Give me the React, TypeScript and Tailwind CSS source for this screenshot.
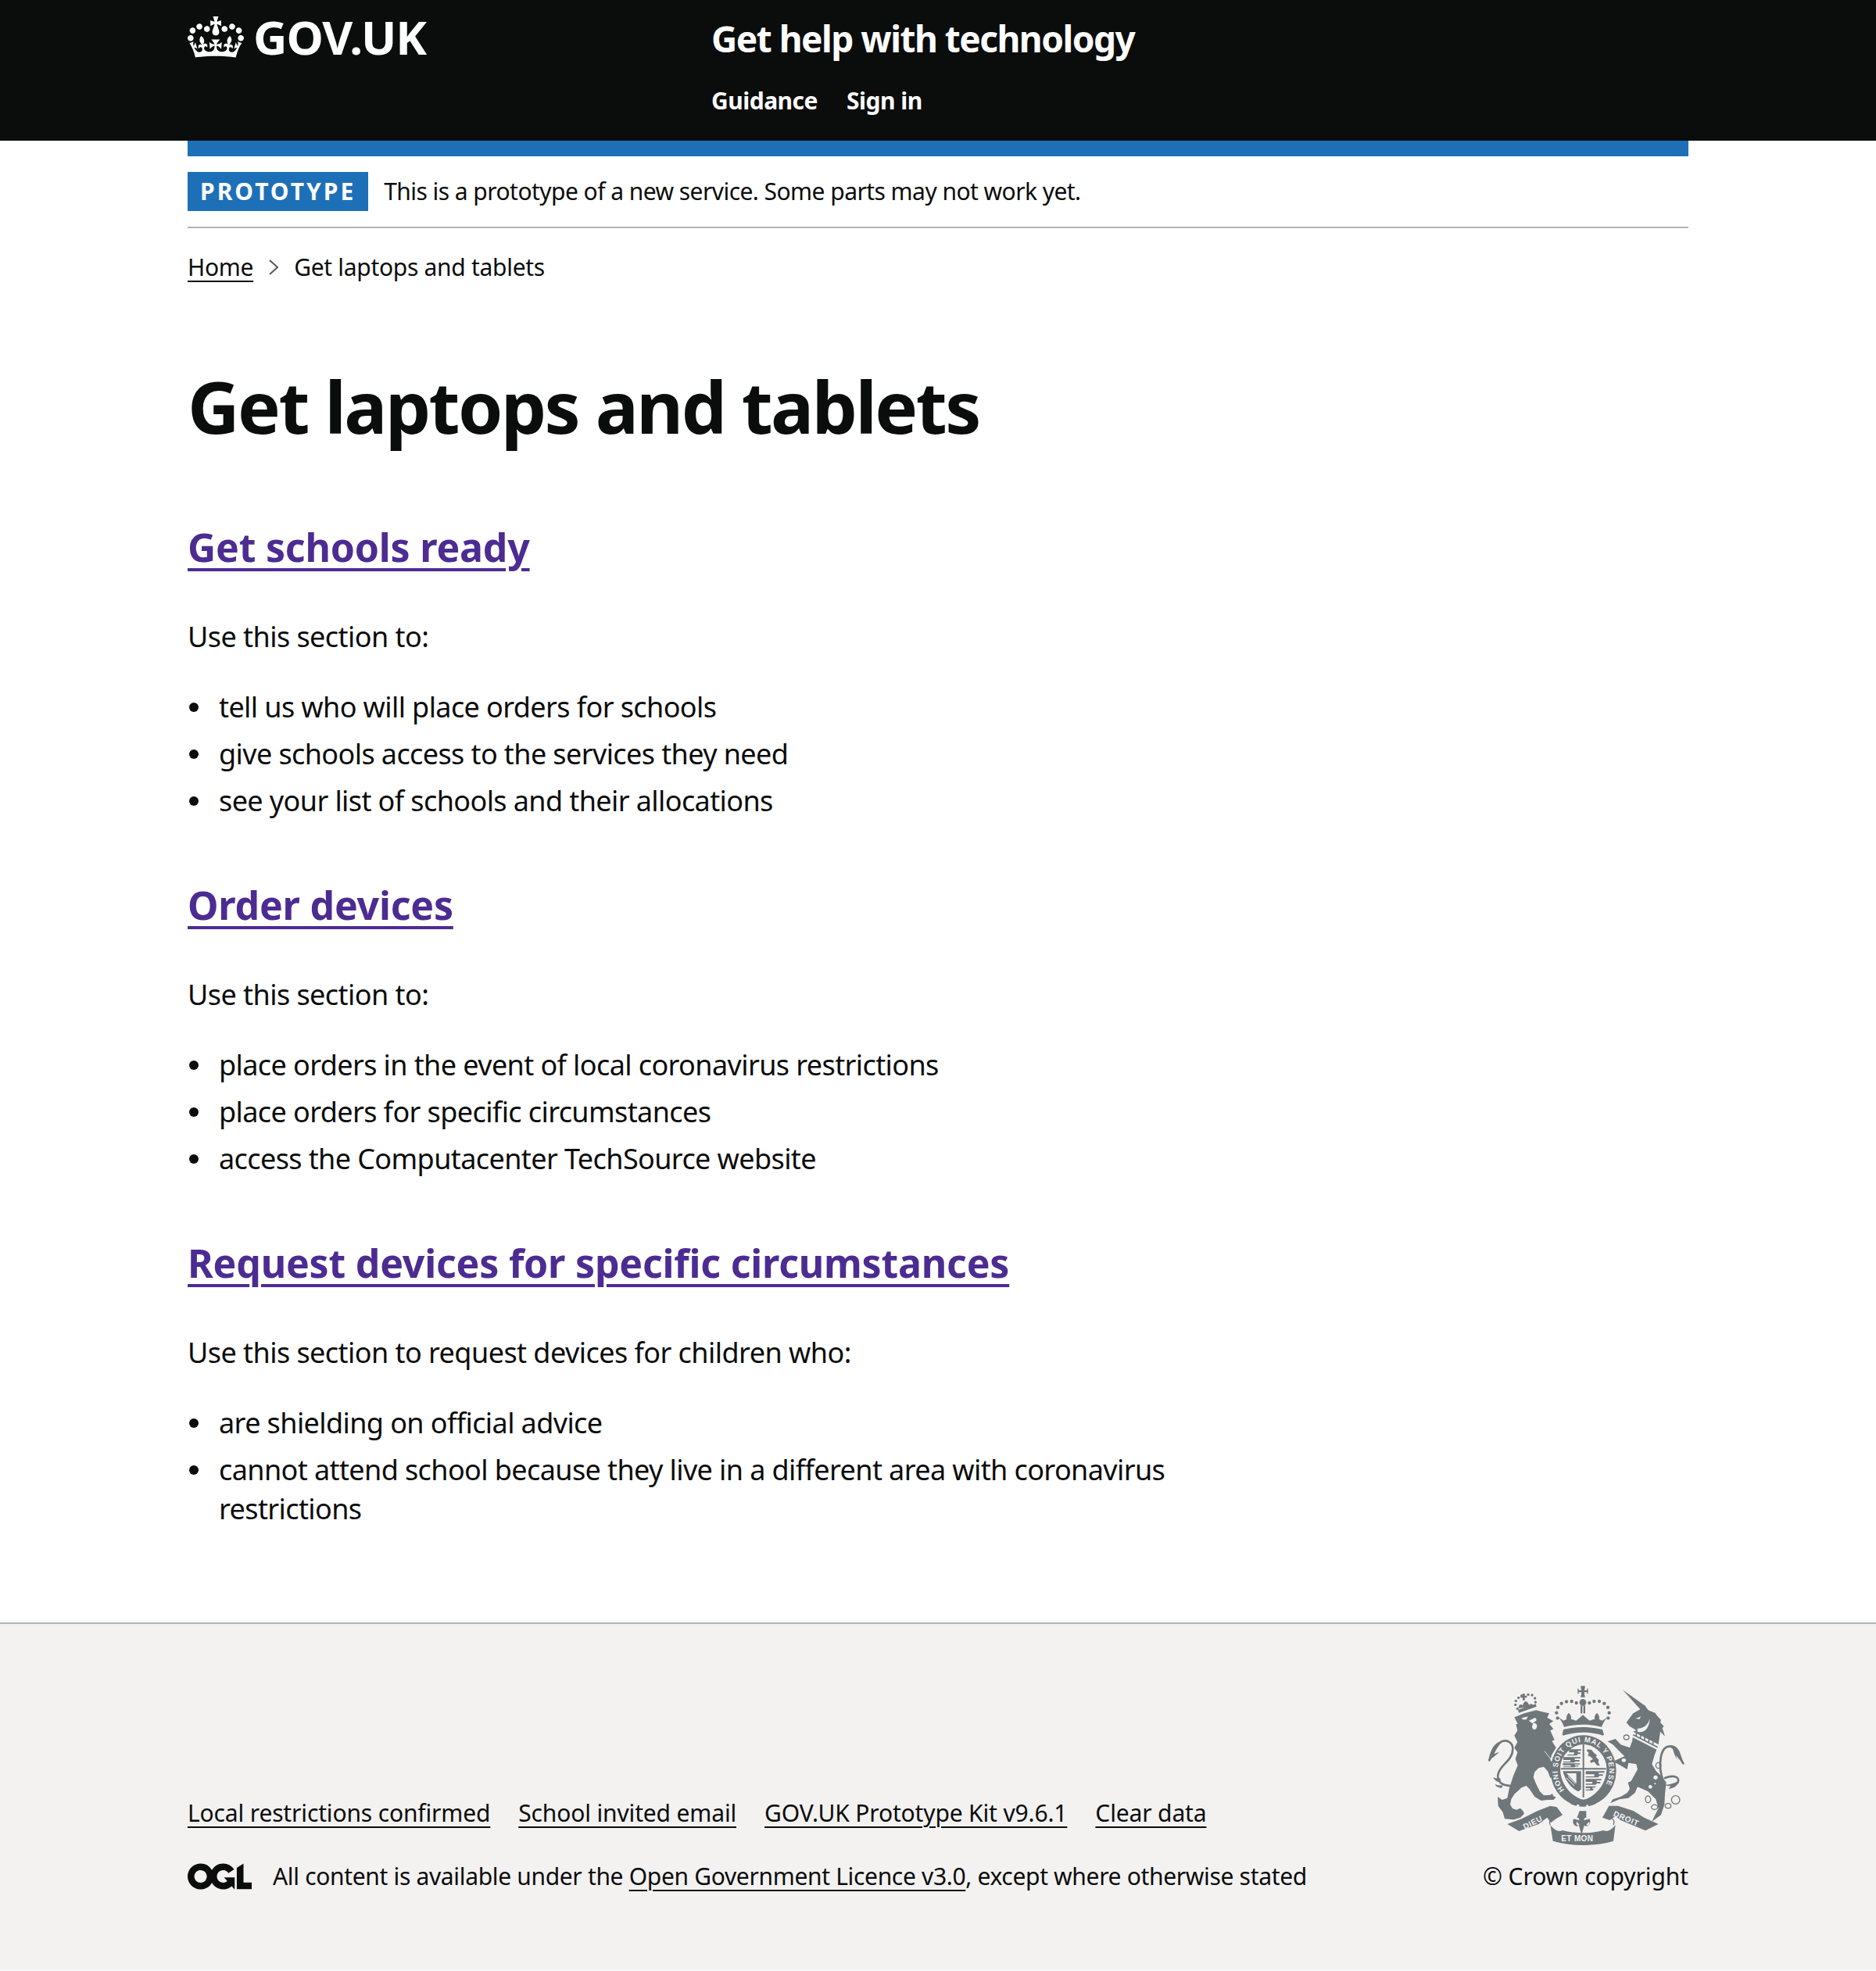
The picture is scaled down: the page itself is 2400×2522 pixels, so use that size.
const font = { fontFamily: '"Noto Sans", sans-serif' };

function CrownLogo() {
  return (
    <svg viewBox="0 0 132 97" width="72" height="53" className="shrink-0 fill-white">
      <path
        fillRule="evenodd"
        d="M25 30.2c3.5 1.5 7.7-.2 9.1-3.7 1.5-3.6-.2-7.8-3.9-9.2-3.6-1.4-7.6.3-9.1 3.9-1.4 3.5.3 7.5 3.9 9zM9 39.5c3.6 1.5 7.8-.2 9.2-3.7 1.5-3.6-.2-7.8-3.9-9.1-3.6-1.5-7.6.2-9.1 3.8-1.4 3.5.3 7.5 3.8 9zM4.4 57.2c3.5 1.5 7.7-.2 9.1-3.8 1.5-3.6-.2-7.7-3.9-9.1-3.5-1.5-7.6.3-9.1 3.8-1.4 3.5.3 7.6 3.9 9.1zm38.3-21.4c3.5 1.5 7.7-.2 9.1-3.8 1.5-3.6-.2-7.7-3.9-9.1-3.6-1.5-7.6.3-9.1 3.8-1.3 3.6.4 7.7 3.9 9.1zm64.4-5.6c-3.6 1.5-7.8-.2-9.1-3.7-1.5-3.6.2-7.8 3.8-9.2 3.6-1.4 7.7.3 9.2 3.9 1.3 3.5-.4 7.5-3.9 9zm15.9 9.3c-3.6 1.5-7.7-.2-9.1-3.7-1.5-3.6.2-7.8 3.7-9.1 3.6-1.5 7.7.2 9.2 3.8 1.5 3.5-.3 7.5-3.8 9zm4.7 17.7c-3.6 1.5-7.8-.2-9.2-3.8-1.5-3.6.2-7.7 3.9-9.1 3.6-1.5 7.7.3 9.2 3.8 1.3 3.5-.4 7.6-3.9 9.1zM89.3 35.8c-3.6 1.5-7.8-.2-9.2-3.8-1.4-3.6.2-7.7 3.9-9.1 3.6-1.5 7.7.3 9.2 3.8 1.4 3.6-.3 7.7-3.9 9.1zM69.7 17.7l8.9 4.7V9.3l-8.9 2.8c-.2-.3-.5-.6-.9-.9L72.4 0H59.6l3.6 11.2c-.3.3-.6.5-.9.9l-8.8-2.8v13.1l8.8-4.7c.3.3.6.7.9.9l-5 15.4v.1c-.2.8-.4 1.6-.4 2.4 0 4.1 3.1 7.5 7 8.1h.2c.3 0 .7.1 1 .1.4 0 .7 0 1-.1h.2c4-.6 7.1-4.1 7.1-8.1 0-.8-.1-1.7-.4-2.4V34l-5.1-15.4c.4-.2.7-.6 1-.9zM66 92.8c16.9 0 32.8 1.1 47.1 3.2 4-16.9 8.9-26.7 14-33.5l-9.6-3.4c1 4.9 1.1 7.2 0 10.2-1.5-1.4-3-4.3-4.2-8.7L108.6 76c2.8-2 5-3.2 7.5-3.3-4.4 9.4-10 11.9-13.6 11.2-4.3-.8-6.3-4.6-5.6-7.9 1-4.7 5.7-5.9 8-.5 4.3-8.7-3-11.4-7.6-8.8 7.1-7.2 7.9-13.5 2.1-21.1-8 6.1-8.1 12.3-4.5 20.8-4.7-5.4-12.1-2.5-9.5 6.2 3.4-5.2 7.9-2 7.2 3.1-.6 4.3-6.4 7.8-13.5 7.2-10.3-.9-10.9-8-11.2-13.8 2.5-.5 7.1 1.8 11 7.3L80.2 60c-4.1 4.4-8 5.3-12.3 5.4 1.4-4.4 8-11.6 8-11.6H55.5s6.4 7.2 7.9 11.6c-4.2-.1-8-1-12.3-5.4l1.4 16.4c3.9-5.5 8.5-7.7 10.9-7.3-.3 5.8-.9 12.8-11.1 13.8-7.2.6-12.9-2.9-13.5-7.2-.7-5 3.8-8.3 7.1-3.1 2.7-8.7-4.6-11.6-9.4-6.2 3.7-8.5 3.6-14.7-4.6-20.8-5.8 7.6-5 13.9 2.2 21.1-4.7-2.6-11.9.1-7.7 8.8 2.3-5.5 7.1-4.2 8.1.5.7 3.3-1.3 7.1-5.7 7.9-3.5.7-9-1.8-13.5-11.2 2.5.1 4.7 1.3 7.5 3.3l-4.7-15.4c-1.2 4.4-2.7 7.2-4.3 8.7-1.1-3-.9-5.3 0-10.2l-9.5 3.4c5 6.9 9.9 16.7 14 33.5 14.8-2.1 30.8-3.2 47.7-3.2z"
      />
    </svg>
  );
}

function OglLogo() {
  return (
    <svg viewBox="0 0 483.2 195.7" width="82" height="34" className="shrink-0 fill-[#0b0c0c]">
      <path d="M421.5 142.8V.1l-50.7 32.3v161.1h112.4v-50.7zm-122.3-9.6A47.12 47.12 0 0 1 221 97.8c0-26 21.1-47.1 47.1-47.1 16.7 0 31.4 8.7 39.7 21.8l42.7-27.2A97.63 97.63 0 0 0 268.1 0c-36.5 0-68.3 20.1-85.1 49.7A98 98 0 0 0 97.8 0C43.9 0 0 43.9 0 97.8s43.9 97.8 97.8 97.8c36.5 0 68.3-20.1 85.1-49.7a97.76 97.76 0 0 0 149.6 25.4l19.4 22.2h3v-87.8h-80l24.3 27.5zM97.8 145c-26 0-47.1-21.1-47.1-47.1s21.1-47.1 47.1-47.1 47.2 21 47.2 47S123.8 145 97.8 145" />
    </svg>
  );
}

const crestDots = [
  [278, 148], [274, 128], [279, 107], [293, 92], [312, 85], [332, 84], [350, 90],
  [400, 90], [418, 84], [438, 84], [457, 92], [471, 107], [476, 128], [472, 148],
];
const lionCrownDots = [
  [124, 112], [116, 97], [118, 82], [128, 70], [140, 62], [165, 58], [180, 60], [191, 72], [193, 87],
];

// royal arms, hand drawn at 3x the size it is shown
function Crest() {
  const c = "#6f777b";
  const bg = "#f3f2f1";
  return (
    <svg viewBox="0 0 780 660" width="260" height="220" className="shrink-0">
      {/* royal crown */}
      <g fill={c}>
        <path d="M367 25h16v10h-2v6h10v-6h4v20h-4v-6h-10v12h2v7h-16v-7h2V49h-10v6h-4V35h4v6h10v-6h-2z" />
        <circle cx="375" cy="88" r="13" />
        <rect x="366" y="100" width="7" height="30" />
        <rect x="377" y="100" width="7" height="30" />
        {crestDots.map(([x, y], i) => (
          <circle key={i} cx={x} cy={y} r="6.5" />
        ))}
        <path d="M303 182c-5-14-12-26-20-36l18 12 12-6c-4-8 2-18 8-24 6 6 12 16 8 24l8 2 12 4 10-8 16-14 16 14 10 8 12-4 8-2c-4-8 2-18 8-24 6 6 12 16 8 24l12 6 18-12c-8 10-15 22-20 36-48-12-98-12-144 0z" />
        <path d="M300 192c50-12 100-12 150 0l6 20c-4 4-6 4-8 2-46-14-98-14-144 0-4 2-6 0-8-2z" />
      </g>

      {/* lion crown */}
      <g fill={c}>
        {lionCrownDots.map(([x, y], i) => (
          <circle key={i} cx={x} cy={y} r="5" />
        ))}
        <path d="M144 54h8v8h8v8h-8v10h-8V70h-8v-8h8z" />
        <path d="M128 110c0-12 8-18 16-10 2-10 8-16 12-16s10 6 12 14c8-8 16-4 18 6z" />
        <path d="M126 116l68-22 3 10-68 24z" />
      </g>

      {/* lion */}
      <path
        fill={c}
        strokeLinejoin="round"
        d="M112 145L150 130L195 118L225 125L246 130L238 146L262 160L246 170L262 190L250 196L266 232L256 236L272 262L255 290L250 310L270 332L282 360L275 378L262 372L250 378L240 352L225 335L205 340L190 355L185 375L195 400L210 430L225 445L250 443L258 438L262 448L272 452L262 462L240 462L215 465L190 450L170 420L158 408L140 415L112 440L100 460L96 480L105 495L120 500L135 494L145 505L150 515L135 530L110 538L75 535L68 510L50 485L48 450L65 462L85 455L92 420L108 370L125 330L116 305L124 280L112 262L124 240L112 215L124 196L118 172L125 170Z"
      />
      <path fill={bg} d="M140 148l24-6-6 12-14 0zM168 158l24-12 6 10-12 10-6 2zM184 168c8-2 14 2 15 10 0 8-4 14-9 14-7 0-10-6-10-12z" />
      <path fill="none" stroke={bg} strokeWidth="2.5" d="M228 275l46 60" />
      <path
        fill="none"
        stroke={c}
        strokeWidth="8"
        strokeLinecap="round"
        d="M110 408C70 410 42 396 50 362C58 326 106 312 106 266C106 240 80 228 60 240C44 252 36 275 16 310"
      />
      <path fill={c} d="M62 238c-16 14-26 30-28 48 8-4 14-6 20-6-8 6-20 18-42 32 4-20 8-32 14-44 8-16 20-28 36-30zM30 375c10 4 20 6 28 4l2 14c-14 2-22-4-30-18zM38 402c10 4 20 6 30 4l-4 10c-12 0-22-4-26-14z" />

      {/* unicorn */}
      <path fill={c} d="M528 40L610 98L598 118Z" />
      <path
        fill={c}
        strokeLinejoin="round"
        d="M605 100L612 98L626 118L652 128L662 142L675 155L672 164L686 180L680 186L690 218L672 200L665 250L650 290L640 325L655 350L680 375L695 395L690 440L688 480L675 520L640 545L652 520L665 495L655 460L625 430L585 412L575 435L550 455L515 460L480 475L490 460L520 450L545 435L555 420L548 395L560 390L585 345L580 325L550 320L545 345L510 325L490 315L535 295L515 275L490 250L470 238L500 228L520 250L555 262L565 235L568 200L580 195L555 180L542 165L568 130L595 115Z"
      />
      <path fill={bg} d="M578 150l20-8-6 10zM585 188c25 0 40-14 47-38-2 38-22 58-48 50z" />
      <path fill={bg} d="M568 200l98 50-6 20-98-50z" />
      <path fill="none" stroke={c} strokeWidth="5" d="M568 212l94 48M580 205v14M596 213v14M612 222v14M628 230v14M644 238v14" />
      <g fill={bg} stroke={c} strokeWidth="4">
        <ellipse cx="542" cy="222" rx="10" ry="9" />
        <ellipse cx="532" cy="310" rx="10" ry="9" />
        <ellipse cx="665" cy="330" rx="10" ry="11" />
      </g>
      <g fill="none" stroke={c} strokeWidth="4">
        <ellipse cx="625" cy="460" rx="10" ry="13" />
        <ellipse cx="650" cy="490" rx="12" ry="9" />
        <ellipse cx="702" cy="485" rx="11" ry="9" />
        <circle cx="731" cy="462" r="16" />
      </g>
      <circle cx="654" cy="376" r="8" fill={bg} />
      <circle cx="634" cy="412" r="7" fill={bg} />
      <circle cx="652" cy="400" r="3" fill={bg} />
      <path
        fill="none"
        stroke={c}
        strokeWidth="8"
        strokeLinecap="round"
        d="M682 385C665 340 668 262 705 257C730 254 745 300 760 322M690 378C722 366 748 372 740 395"
      />
      <path fill={c} d="M708 252c18-2 34 10 40 30l14 40c-10-8-22-18-28-30 0 6 2 12 6 18-10-12-16-28-20-44zM744 392c-6 16-20 26-40 28l8-12c-10 2-16 0-20-4 14 0 30-4 48-14z" />

      {/* shield */}
      <ellipse cx="377" cy="350" rx="126" ry="136" fill={c} />
      <path fill={bg} d="M288 343C288 292 330 252 377 248C424 252 466 292 466 343C466 400 425 450 377 462C329 450 288 400 288 343Z" />
      <path fill="none" stroke={c} strokeWidth="6" d="M377 248v205M290 343h174" />
      <g fill={c}>
        <path d="M322 268h46v6h-12v6h10v6h-10l-4 6h-36v-4h24l2-8h-20z" />
        <path d="M300 298h66v5h-22v6h18v6h-16l-4 4h-42v-4h26l2-6h-28z" />
        <path d="M298 322h66v4h-20v4h14v4h-12l-2 3h-44v-3h28l2-5h-32z" />
        <path d="M386 352h72v6h-22v6h16v6h-14l-4 6h-48v-4h32l2-8h-34z" />
        <path d="M386 382h60v5h-18v6h14v6h-14l-4 5h-38v-4h24l2-7h-26z" />
        <path d="M386 410h40l-4 5h-10v5h6l-6 6h-26v-4h16l2-5h-18z" />
        <path d="M392 268l16 2 10 12 12 10-6 4 12 12-2 10 6 12h-10l-12-14-12 4-4-8 12-6-10-10-10-4 4-10-8-8z" />
        <path fillRule="evenodd" d="M298 352h70v70l-10 8c-26-10-50-40-60-78zM312 360l38 40v-40z" />
        <path d="M318 372l28 28M312 378l30 30" fill="none" stroke={bg} strokeWidth="3" />
      </g>
      <path id="crest-ring" d="M304 424A99 110 0 1 1 450 424" fill="none" />
      <text fontFamily="Liberation Sans" fontWeight="700" fontSize="28" fill={bg}>
        <textPath href="#crest-ring" textLength="462" lengthAdjust="spacing">HONI SOIT QUI MAL Y PENSE</textPath>
      </text>
      <path fill={c} d="M320 448c36 18 78 18 112 0l-8 30c-30 14-66 14-96 0z" />
      <circle cx="356" cy="484" r="5" fill={bg} />
      <circle cx="392" cy="486" r="5" fill={bg} />

      {/* ribbon and fleur */}
      <g fill={c}>
        <path d="M85 555L140 535L200 505L250 485L275 490L297 520L272 535L252 550L238 530L205 555L130 582Z" />
        <path d="M665 555L610 530L570 505L510 485L475 485L450 530L478 540L500 525L520 540L615 580Z" />
        <path d="M250 558c10 14 24 24 36 24 2 0 8-2 14-2 40 12 110 12 150 0 8 0 12 2 14 2 12 0 26-10 36-24l-8 62c-64 20-160 22-232 0z" />
        <path d="M362 505h26v26h-6l-4 10 22-6c6 8 4 24-10 28l-10-2-4 14-4 14h-4l-4-14-4-14-10 2c-14-4-16-20-10-28l22 6-4-10h-6z" />
      </g>
      <path fill={bg} d="M352 546c-4 6-2 12 4 14l6-2zM398 546c4 6 2 12-4 14l-6-2z" />
      <path fill="none" stroke={c} strokeWidth="4" d="M250 558c-8-16 4-30 22-26M492 558c8-16-4-30-22-26" />
      <g fontFamily="Liberation Sans" fontWeight="700" fontSize="30" fill={bg}>
        <text x="152" y="576" letterSpacing="2" transform="rotate(-27 152 576)">DIEU</text>
        <text x="292" y="622" letterSpacing="1">ET MON</text>
        <text x="490" y="523" letterSpacing="2" transform="rotate(23 490 523)">DROIT</text>
      </g>
    </svg>
  );
}

function Section({ title, intro, items }: { title: string; intro: string; items: string[] }) {
  return (
    <section className="mb-[78px] last:mb-0">
      <h2 className="mb-[60px] text-[50px] leading-[60px] font-bold tracking-[-0.2px]">
        <a href="#" className="text-[#4c2c92] underline decoration-[4px] underline-offset-[8px]">
          {title}
        </a>
      </h2>
      <p className="mb-10 text-[36px] leading-[50px] tracking-[-0.55px]">{intro}</p>
      <ul className="max-w-[1280px] text-[36px] leading-[50px] tracking-[-0.6px]">
        {items.map((item) => (
          <li key={item} className="mb-[10px] flex last:mb-0">
            <span className="mt-[19px] mr-[26px] ml-[2px] size-[12px] shrink-0 rounded-full bg-[#0b0c0c]" />
            <span>{item}</span>
          </li>
        ))}
      </ul>
    </section>
  );
}

export default function App() {
  return (
    <div style={font} className="min-h-[2522px] bg-white text-[#0b0c0c]">
      <header className="h-[180px] bg-[#0b0c0c] text-white">
        <div className="mx-auto flex w-[1920px]">
          <div className="flex w-[670px] items-center gap-[12px] self-start pt-[21px]">
            <CrownLogo />
            <span className="text-[60px] leading-[53px] font-bold tracking-[-1px]">GOV.UK</span>
          </div>
          <div className="pt-[19px]">
            <div className="text-[46px] leading-[60px] font-bold tracking-[-1.5px]">Get help with technology</div>
            <nav className="mt-[30px] flex gap-[37px] text-[30px] leading-[40px] font-bold tracking-[-0.5px]">
              <a href="#">Guidance</a>
              <a href="#">Sign in</a>
            </nav>
          </div>
        </div>
      </header>

      <div className="mx-auto w-[1920px]">
        <div className="h-5 bg-[#1d70b8]" />
        <div className="flex items-center gap-5 border-b-2 border-[#b1b4b6] py-5">
          <strong className="bg-[#1d70b8] px-4 text-[30px] leading-[50px] font-bold tracking-[3px] text-white">PROTOTYPE</strong>
          <span className="text-[30px] leading-[40px] tracking-[-0.55px]">This is a prototype of a new service. Some parts may not work yet.</span>
        </div>
        <nav className="mt-[30px] flex items-center text-[30px] leading-[40px] tracking-[-0.3px]">
          <a href="#" className="underline decoration-2 underline-offset-[6px]">Home</a>
          <svg viewBox="0 0 12 20" width="12" height="20" className="mx-[20px] fill-none stroke-[#505a5f] stroke-2">
            <path d="M1 1l10 9L1 19" />
          </svg>
          <span>Get laptops and tablets</span>
        </nav>

        <main className="pt-[108px]">
          <h1 className="mb-[100px] text-[92px] leading-[100px] font-bold tracking-[-2.5px]">Get laptops and tablets</h1>
          <Section
            title="Get schools ready"
            intro="Use this section to:"
            items={[
              "tell us who will place orders for schools",
              "give schools access to the services they need",
              "see your list of schools and their allocations",
            ]}
          />
          <Section
            title="Order devices"
            intro="Use this section to:"
            items={[
              "place orders in the event of local coronavirus restrictions",
              "place orders for specific circumstances",
              "access the Computacenter TechSource website",
            ]}
          />
          <Section
            title="Request devices for specific circumstances"
            intro="Use this section to request devices for children who:"
            items={[
              "are shielding on official advice",
              "cannot attend school because they live in a different area with coronavirus restrictions",
            ]}
          />
        </main>
      </div>

      <footer className="mt-[120px] h-[445px] border-t-2 border-[#b1b4b6] bg-[#f3f2f1]">
        <div className="mx-auto flex w-[1920px] items-end justify-between pt-[71px]">
          <div>
            <div className="mb-[41px] flex gap-[36px] text-[30px] leading-[40px] tracking-[-0.15px]">
              {["Local restrictions confirmed", "School invited email", "GOV.UK Prototype Kit v9.6.1", "Clear data"].map((l) => (
                <a key={l} href="#" className="underline decoration-2 underline-offset-[6px]">{l}</a>
              ))}
            </div>
            <div className="flex items-center gap-[27px] text-[30px] leading-[40px] tracking-[-0.33px]">
              <OglLogo />
              <span>
                All content is available under the{" "}
                <a href="#" className="underline decoration-2 underline-offset-[6px]">Open Government Licence v3.0</a>
                , except where otherwise stated
              </span>
            </div>
          </div>
          <div className="flex flex-col items-end">
            <Crest />
            <a href="#" className="mt-[12px] text-[30px] leading-[40px] tracking-[-0.1px]">© Crown copyright</a>
          </div>
        </div>
      </footer>
    </div>
  );
}
